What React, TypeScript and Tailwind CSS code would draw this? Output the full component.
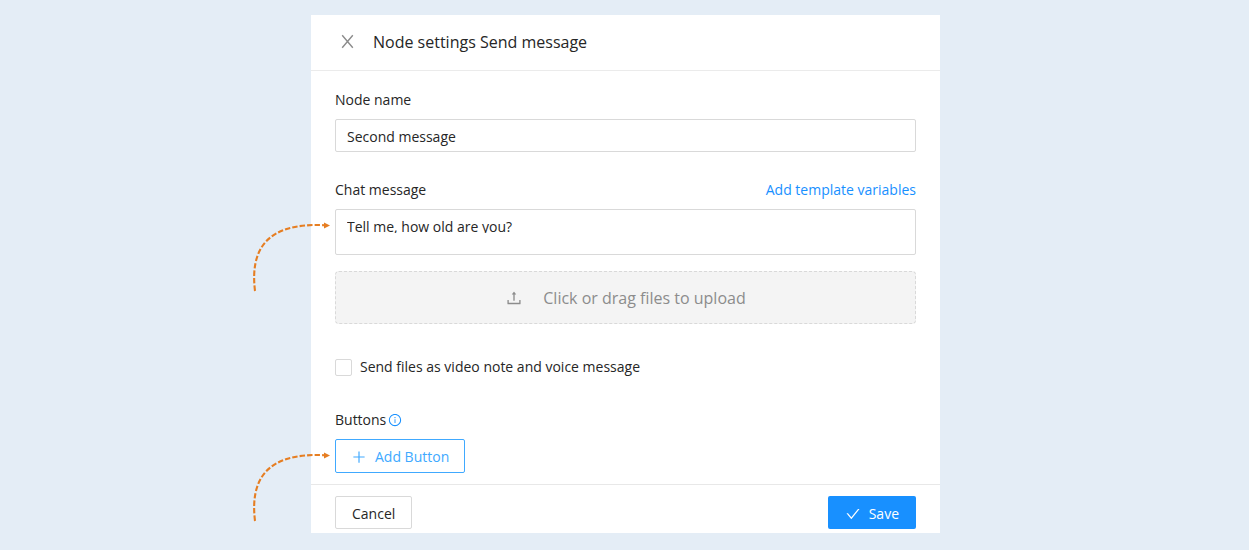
import {
  AiOutlineCheck,
  AiOutlineInfoCircle,
  AiOutlinePlus,
  AiOutlineUpload,
} from "react-icons/ai";

function CloseIcon() {
  return (
    <svg width="17" height="17" viewBox="0 0 17 17" fill="none" aria-hidden="true">
      <path d="M3.2 2.2L13.8 14.8M13.8 2.2L3.2 14.8" stroke="currentColor" strokeWidth="1.4" />
    </svg>
  );
}

function HintArrow() {
  return (
    <svg
      className="pointer-events-none absolute top-[11px] -left-[85px]"
      width="85"
      height="75"
      viewBox="0 0 85 75"
      fill="none"
      aria-hidden="true"
    >
      <path
        d="M5 71C0 30 16 2.5 74 5.2"
        stroke="#e67e22"
        strokeWidth="2.1"
        strokeDasharray="5.4 2.1"
      />
      <path d="M74 2.4L80 5.6L74 8.6Z" fill="#e67e22" />
    </svg>
  );
}

export default function App() {
  return (
    <main className="min-h-screen bg-[#e4edf6] py-[15px] pl-0.5 font-['Open_Sans',sans-serif] text-sm text-[#262626]">
      <form
        className="mx-auto w-full max-w-[629px] bg-white"
        onSubmit={(event) => event.preventDefault()}
      >
        <header className="flex h-14 items-center border-b border-[#ebebeb] px-7 pb-0.5">
          <button type="button" aria-label="Close" className="text-[#8c8c8c]">
            <CloseIcon />
          </button>
          <h1 className="ml-[17px] text-base">Node settings Send message</h1>
        </header>

        <div className="px-6 pt-[18px] pb-[11px]">
          <label htmlFor="node-name" className="mb-2 block leading-[22px]">
            Node name
          </label>
          <input
            id="node-name"
            type="text"
            defaultValue="Second message"
            className="block h-[33px] w-full rounded-xs border border-[#d9d9d9] px-[11px] pt-0.5 outline-none"
          />

          <div className="mt-[27px] mb-2 flex justify-between leading-[22px]">
            <label htmlFor="chat-message">Chat message</label>
            <a href="#variables" className="text-[#1890ff]">
              Add template variables
            </a>
          </div>
          <div className="relative">
            <div className="h-[46px] rounded-xs border border-[#d9d9d9] px-[11px] pt-[5px]">
              <textarea
                id="chat-message"
                rows={1}
                defaultValue="Tell me, how old are you?"
                className="block h-[18px] w-full resize-none overflow-hidden leading-6 outline-none"
              />
            </div>
            <HintArrow />
          </div>

          <button
            type="button"
            className="mt-4 flex h-[53px] w-full items-center justify-center gap-5 rounded-sm border border-dashed border-[#d9d9d9] bg-[#f4f4f4] text-base text-[#8c8c8c]"
          >
            <AiOutlineUpload size={18} />
            Click or drag files to upload
          </button>

          <label className="mt-8 flex items-center gap-2 leading-[22px]">
            <input
              type="checkbox"
              className="size-[17px] appearance-none rounded-xs border border-[#d9d9d9] bg-white checked:bg-[#1890ff]"
            />
            Send files as video note and voice message
          </label>

          <div className="mt-[31px] mb-2 flex items-center gap-0.5 leading-[22px]">
            Buttons
            <AiOutlineInfoCircle size={14} className="text-[#1890ff]" />
          </div>
          <div className="relative">
            <button
              type="button"
              className="flex h-[34px] items-center gap-2 rounded-xs border border-[#40a9ff] px-[15px] pt-0.5 text-[#40a9ff]"
            >
              <AiOutlinePlus size={16} />
              Add Button
            </button>
            <HintArrow />
          </div>
        </div>

        <footer className="flex justify-between border-t border-[#e8e8e8] px-6 pt-[11px] pb-1">
          <button
            type="button"
            className="h-[33px] rounded-xs border border-[#d9d9d9] px-4 pt-0.5"
          >
            Cancel
          </button>
          <button
            type="submit"
            className="flex h-[33px] items-center gap-2 rounded-xs bg-[#1890ff] px-[17px] pt-0.5 text-white"
          >
            <AiOutlineCheck size={16} />
            Save
          </button>
        </footer>
      </form>
    </main>
  );
}
